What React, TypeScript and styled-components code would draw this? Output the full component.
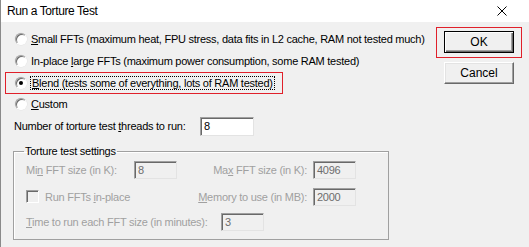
import React from 'react';
import styled, { createGlobalStyle } from 'styled-components';

const GlobalStyle = createGlobalStyle`
  html, body {
    margin: 0;
    padding: 0;
    background: #f0f0f0;
  }
  body {
    font-family: "Liberation Sans", Arial, sans-serif;
    font-size: 11px;
    letter-spacing: -0.25px;
    color: #000;
  }
`;

const Window = styled.div`
  width: 529px;
  height: 247px;
  box-sizing: border-box;
  border-left: 1px solid #8a8a8a;
  background: #f0f0f0;
  display: flex;
  flex-direction: column;
  overflow: hidden;
`;

const TitleBar = styled.div`
  height: 22px;
  flex: none;
  background: #fff;
  display: flex;
  align-items: center;
  justify-content: space-between;
  padding: 0 22px 0 6px;
  font-size: 12px;
  letter-spacing: -0.4px;
`;

const CloseIcon = styled.svg`
  width: 10px;
  height: 10px;
`;

const Body = styled.div`
  flex: 1;
  display: flex;
  justify-content: space-between;
  padding: 5px 7px 0 4px;
`;

const LeftColumn = styled.div`
  display: flex;
  flex-direction: column;
  padding-top: 1px;
`;

const RightColumn = styled.div`
  display: flex;
  flex-direction: column;
  align-items: center;
`;

const RadioRow = styled.label<{ $highlight?: boolean; $h?: number }>`
  height: ${p => p.$h ?? 22}px;
  width: 278px;
  box-sizing: border-box;
  display: flex;
  align-items: center;
  gap: 4px;
  padding-left: 10px;
  white-space: nowrap;
  outline: ${p => (p.$highlight ? '1px solid #e0202a' : 'none')};
  outline-offset: -1px;
`;

const RadioCircle = styled.span<{ $checked?: boolean }>`
  width: 12px;
  height: 12px;
  box-sizing: border-box;
  border-radius: 50%;
  flex: none;
  background: #fff;
  border: 1px solid;
  border-color: #a0a0a0 #fff #fff #a0a0a0;
  box-shadow: inset 1px 1px 0 #696969, 0 0 0 0.5px #e3e3e3;
  display: flex;
  align-items: center;
  justify-content: center;
  &::after {
    content: '';
    width: 4px;
    height: 4px;
    border-radius: 50%;
    background: ${p => (p.$checked ? '#000' : 'transparent')};
  }
`;

const FocusText = styled.span`
  outline: 1px dotted #000;
  padding: 0 1px;
`;

const ThreadsRow = styled.div`
  height: 20px;
  margin-top: 2px;
  display: flex;
  align-items: center;
  padding-left: 9px;
`;

const ThreadsLabel = styled.span`
  width: 186px;
`;

const TextBox = styled.div<{ $disabled?: boolean; $w?: number; $h?: number }>`
  width: ${p => p.$w ?? 43}px;
  height: ${p => p.$h ?? 18}px;
  box-sizing: border-box;
  border: 1px solid;
  border-color: #a0a0a0 #e3e3e3 #e3e3e3 #a0a0a0;
  box-shadow: inset 1px 1px 0 #696969;
  background: ${p => (p.$disabled ? '#f0f0f0' : '#fff')};
  color: ${p => (p.$disabled ? '#6d6d6d' : '#000')};
  padding: 1px 0 0 3px;
  line-height: 15px;
  flex: none;
`;

const GroupBox = styled.fieldset`
  margin: 9px 0 0 8px;
  width: 376px;
  height: 95px;
  box-sizing: border-box;
  border: 1px solid #a0a0a0;
  box-shadow: 1px 1px 0 #fff inset;
  padding: 0 32px 0 12px;
  min-inline-size: 0;
`;

const Legend = styled.legend`
  padding: 0 1px;
  margin-left: -2px;
`;

const SettingsGrid = styled.div`
  display: grid;
  grid-template-columns: 108px 43px 1fr 43px;
  grid-auto-rows: 27px;
  align-items: center;
  margin-top: -1px;
`;

const Disabled = styled.span<{ $right?: boolean }>`
  color: #a0a0a0;
  white-space: nowrap;
  text-align: ${p => (p.$right ? 'right' : 'left')};
  padding-right: ${p => (p.$right ? '6px' : '0')};
`;

const CheckRow = styled.div`
  grid-column: span 2;
  display: flex;
  align-items: center;
  gap: 6px;
  color: #a0a0a0;
`;

const CheckBox = styled.span`
  width: 13px;
  height: 13px;
  box-sizing: border-box;
  border: 1px solid;
  border-color: #a0a0a0 #fff #fff #a0a0a0;
  box-shadow: inset 1px 1px 0 #696969;
  background: #f0f0f0;
`;

const TimeRow = styled.div`
  display: flex;
  align-items: center;
  height: 22px;
  margin-top: 1px;
`;

const TimeLabel = styled(Disabled)`
  width: 195px;
`;

const ButtonFrame = styled.div<{ $highlight?: boolean }>`
  width: 86px;
  height: 31px;
  box-sizing: border-box;
  padding-top: 4px;
  display: flex;
  justify-content: center;
  outline: ${p => (p.$highlight ? '1px solid #e0202a' : 'none')};
  outline-offset: -1px;
`;

const Button = styled.button<{ $default?: boolean }>`
  width: 70px;
  height: 22px;
  box-sizing: border-box;
  font: inherit;
  font-size: 12px;
  letter-spacing: 0;
  background: #f0f0f0;
  color: #000;
  padding: 0;
  border: 1px solid;
  border-color: ${p => (p.$default ? '#000' : '#fff #696969 #696969 #fff')};
  box-shadow: ${p =>
    p.$default
      ? 'inset 1px 1px 0 #fff, inset -1px -1px 0 #696969, inset -2px -2px 0 #a0a0a0'
      : 'inset -1px -1px 0 #a0a0a0, inset 1px 1px 0 #e3e3e3'};
`;

const U = styled.span`
  text-decoration: underline;
`;

export default function App() {
  return (
    <>
      <GlobalStyle />
      <Window>
        <TitleBar>
          <span>Run a Torture Test</span>
          <CloseIcon viewBox="0 0 10 10">
            <path d="M0.5 0.5 L9.5 9.5 M9.5 0.5 L0.5 9.5" stroke="#000" strokeWidth="1" />
          </CloseIcon>
        </TitleBar>
        <Body>
          <LeftColumn>
            <RadioRow>
              <RadioCircle />
              <span>
                <U>S</U>mall FFTs (maximum heat, FPU stress, data fits in L2 cache, RAM not tested much)
              </span>
            </RadioRow>
            <RadioRow>
              <RadioCircle />
              <span>
                In-place <U>l</U>arge FFTs (maximum power consumption, some RAM tested)
              </span>
            </RadioRow>
            <RadioRow $highlight>
              <RadioCircle $checked />
              <FocusText>
                <U>B</U>lend (tests some of everything, lots of RAM tested)
              </FocusText>
            </RadioRow>
            <RadioRow $h={20}>
              <RadioCircle />
              <span>
                <U>C</U>ustom
              </span>
            </RadioRow>
            <ThreadsRow>
              <ThreadsLabel>
                Number of torture test <U>t</U>hreads to run:
              </ThreadsLabel>
              <TextBox $w={54} $h={19}>8</TextBox>
            </ThreadsRow>
            <GroupBox>
              <Legend>Torture test settings</Legend>
              <SettingsGrid>
                <Disabled>
                  Mi<U>n</U> FFT size (in K):
                </Disabled>
                <TextBox $disabled>8</TextBox>
                <Disabled $right>
                  Ma<U>x</U> FFT size (in K):
                </Disabled>
                <TextBox $disabled>4096</TextBox>
                <CheckRow>
                  <CheckBox />
                  <span>
                    Run FFTs <U>i</U>n-place
                  </span>
                </CheckRow>
                <Disabled $right>
                  <U>M</U>emory to use (in MB):
                </Disabled>
                <TextBox $disabled>2000</TextBox>
              </SettingsGrid>
              <TimeRow>
                <TimeLabel>
                  <U>T</U>ime to run each FFT size (in minutes):
                </TimeLabel>
                <TextBox $disabled>3</TextBox>
              </TimeRow>
            </GroupBox>
          </LeftColumn>
          <RightColumn>
            <ButtonFrame $highlight>
              <Button $default>OK</Button>
            </ButtonFrame>
            <ButtonFrame>
              <Button>Cancel</Button>
            </ButtonFrame>
          </RightColumn>
        </Body>
      </Window>
    </>
  );
}
